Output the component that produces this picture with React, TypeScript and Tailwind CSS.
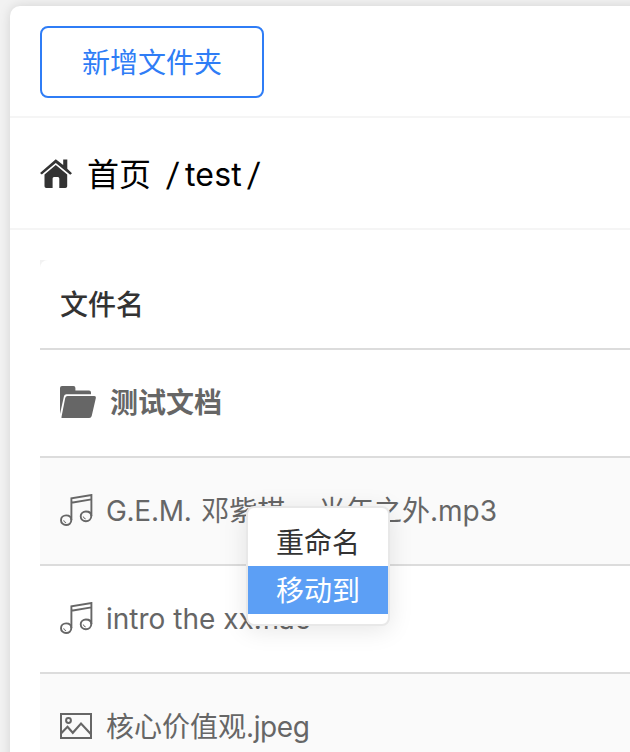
import type { ReactNode } from 'react';

const HomeIcon = () => (
  <svg width="32" height="32" viewBox="0 0 32 32" className="mt-1 shrink-0 fill-[#333]">
    <path d="M15.8 0.3 0 13.9l1.8 1.7L15.8 3.9l14.4 11.9 1.8-1.6-4.7-4.4V.6h-4.1v5.5z" />
    <path d="M15.8 5.9 4.5 15.4v11.8q0 1.8 1.8 1.8h6.3v-9.4q0-1.5 1.4-1.5h3.9q1.4 0 1.4 1.5V29h6q1.9 0 1.9-1.8V15.6z" />
  </svg>
);

const FolderIcon = () => (
  <svg width="36" height="32" viewBox="0 0 36 32" className="-mt-0.5 shrink-0 fill-[#666]">
    <path d="M0 28V2q0-2 2-2h11.5Q15.4 0 15.4 2v2.4H29q2 0 2 2v1.9H6.3Q4.5 8.3 4 10z" />
    <path d="M7.5 10H34q2.3 0 1.8 2.2L31.7 30q-.5 2-2.5 2H1.8Q1.3 32 1.6 30.5L5.2 12q.5-2 2.3-2z" />
  </svg>
);

const MusicIcon = () => (
  <svg width="33" height="32" viewBox="0 0 33 32" fill="none" stroke="#666" strokeWidth="1.9" className="-mt-0.5 -mr-px shrink-0">
    <path d="M11.4 26V4.2L31.4 1v21M11.4 8.8 31.4 5.4" />
    <path d="M11.3 26c0 3.2-2.4 5-5.2 5S1 29 1 26.2s2.3-4.8 5.1-4.8 5.2 1.5 5.2 4.6zM31.3 22c0 3.2-2.6 5.2-5.4 5.2s-5.2-2.1-5.2-4.9 2.4-4.8 5.2-4.8 5.4 1.4 5.4 4.5z" />
    <path d="M3.7 26.3q.3 2 2.4 2.4M23.3 22.5q.3 2 2.4 2.4" strokeWidth="1" />
  </svg>
);

const ImageIcon = () => (
  <svg width="32" height="26" viewBox="0 0 32 26" fill="none" stroke="#666" strokeWidth="2" className="-mt-0.5 shrink-0">
    <path d="M1 1h30v24H1z" />
    <circle cx="8.5" cy="7.5" r="2.4" />
    <path d="m1 20.5 6.5-6.7 5.3 6L21 10.5l10 10.8" strokeWidth="2.1" />
  </svg>
);

const Row = ({ icon, striped, children }: { icon: ReactNode; striped?: boolean; children: ReactNode }) => (
  <div className={`flex h-[108px] shrink-0 items-center border-b-2 border-[#dcdcdc] pl-5 whitespace-nowrap ${striped ? 'bg-[#fafafa]' : ''}`}>
    {icon}
    {children}
  </div>
);

export default function App() {
  return (
    <div className="h-[752px] w-[630px] overflow-hidden bg-[#f2f2f2] pt-1.5 pl-2.5 font-['Inter','Noto_Sans_CJK_SC',sans-serif] text-[28px] leading-none text-[#666]">
      <main className="h-[900px] w-[640px] rounded-tl-[10px] bg-white shadow-[0_0_12px_rgba(0,0,0,0.13)]">
        <div className="h-28 border-b-2 border-[#f5f5f5] pt-5 pl-[30px]">
          <button className="flex h-[72px] w-56 items-center justify-center rounded-lg border-2 border-[#2f7df6] pt-0.5 text-[#2f7df6]">新增文件夹</button>
        </div>
        <nav className="flex h-28 items-center border-b-2 border-[#f5f5f5] pl-[30px] text-[32px] whitespace-pre text-black">
          <HomeIcon />
          <span className="mt-1 ml-[15px] w-20">首页</span>
          <span className="mt-1 w-[17px]"><span className="inline-block -skew-x-6">/</span></span>
          <span className="mt-1 ml-px w-[63px] tracking-[0.2px]">test</span>
          <span className="mt-1 -skew-x-6">/</span>
        </nav>
        <section className="mt-[30px] ml-[30px]">
          <div className="bg-[#f2f2f2]">
            <div className="flex h-[90px] items-center rounded-tl-lg border-b-2 border-[#dcdcdc] bg-white pt-0.5 pl-5 font-medium text-[#333]">文件名</div>
          </div>
          <Row icon={<FolderIcon />}><strong className="ml-3.5 font-bold">测试文档</strong></Row>
          <Row icon={<MusicIcon />} striped>
            <span className="ml-3.5 [word-spacing:2px]"><span className="tracking-[-0.3px]">G.E.M.</span> 邓紫棋 - 光年之外.mp3</span>
          </Row>
          <Row icon={<MusicIcon />}><span className="ml-3.5">intro the xx.flac</span></Row>
          <Row icon={<ImageIcon />} striped><span className="ml-3.5">核心价值观<span className="tracking-[-0.4px]">.jpeg</span></span></Row>
        </section>
      </main>
      <div className="absolute top-[506px] left-[246px] h-[120px] w-36 rounded-lg border-2 border-[#e8e8e8] bg-white py-2.5 text-[#333] shadow-[0_4px_24px_rgba(0,0,0,0.1)]">
        <div className="flex h-12 items-center justify-center pt-px">重命名</div>
        <div className="flex h-12 items-center justify-center bg-[#5c9ff5] pt-0.5 text-white">移动到</div>
      </div>
    </div>
  );
}
